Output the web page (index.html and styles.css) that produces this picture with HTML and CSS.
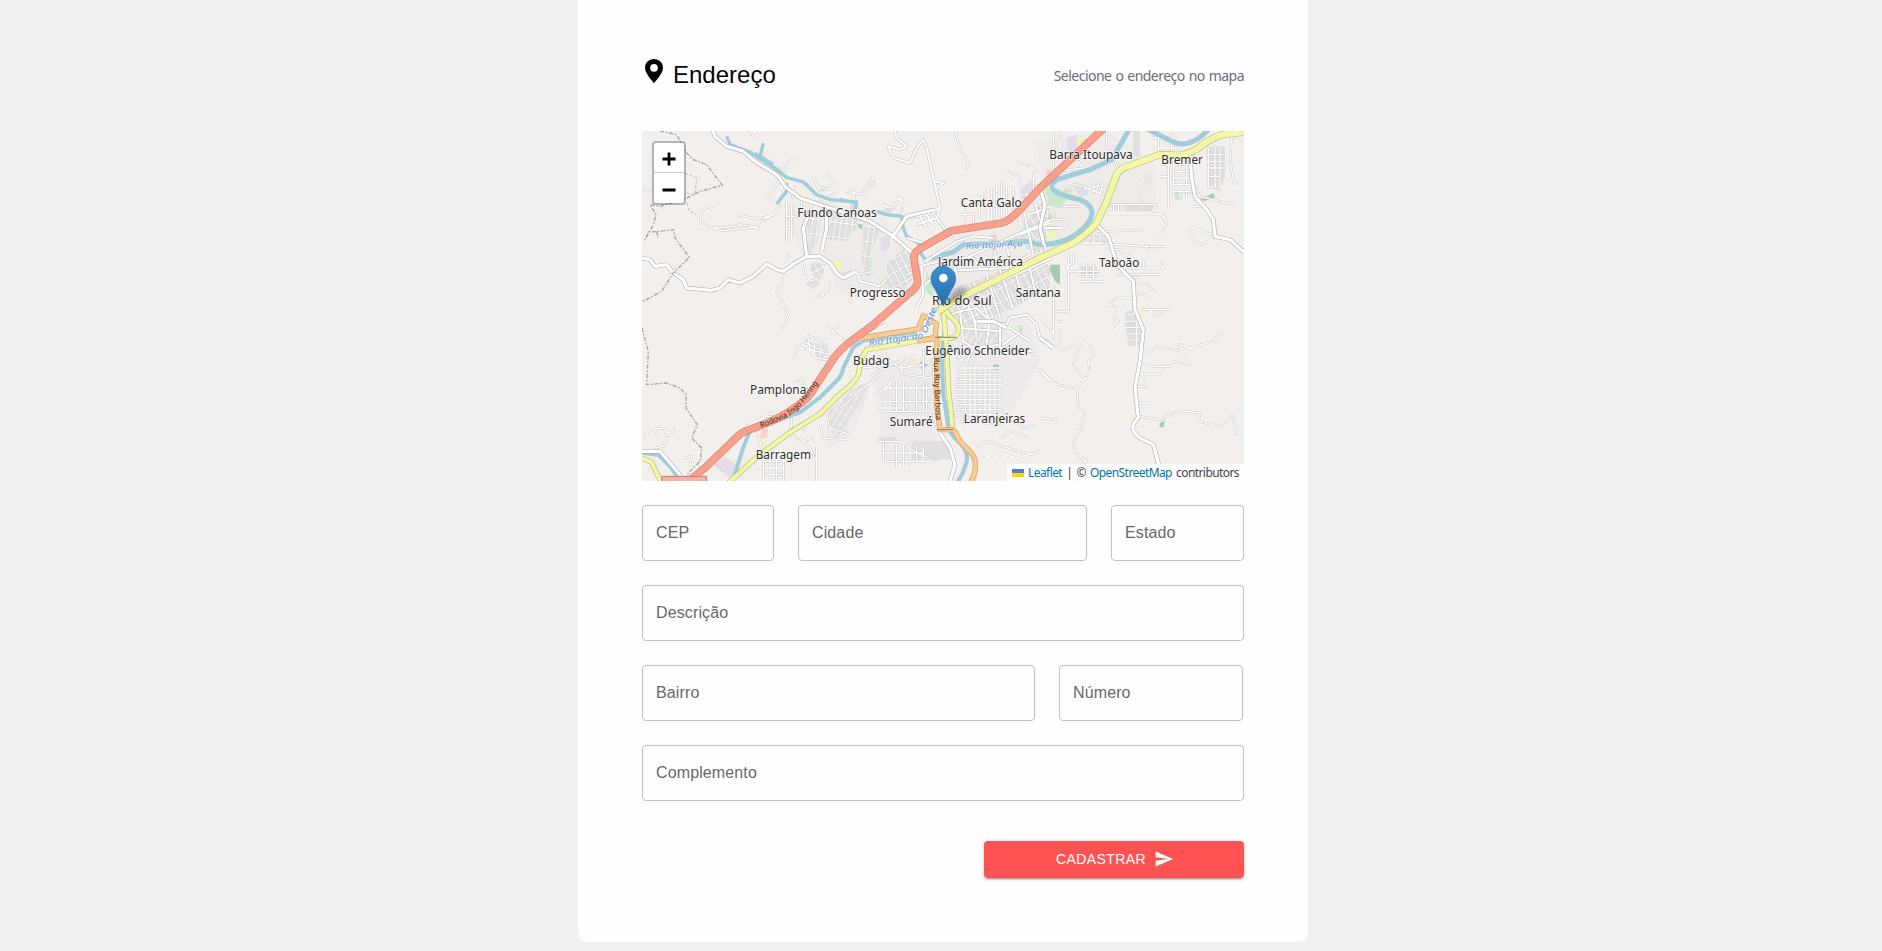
FILE: index.html
```html
<!DOCTYPE html>
<html lang="pt-BR">
<head>
<meta charset="utf-8">
<title>Endereço</title>
<link rel="stylesheet" href="styles.css">
</head>
<body>
<main class="card">
  <header class="header">
    <h1 class="title">
      <svg class="title-icon" viewBox="0 0 18 24"><path fill-rule="evenodd" d="M9 0C4 0 0 3.9 0 8.700C0 15 9 24 9 24S18 15 18 8.700C18 3.900 14 0 9 0ZM9 4.900A3.800 3.900 0 1 1 9 12.700A3.800 3.900 0 1 1 9 4.900Z"/></svg>
      <span>Endereço</span>
    </h1>
    <span class="hint">Selecione o endereço no mapa</span>
  </header>

  <section class="map">
    <svg class="map-canvas" viewBox="6 9 1806 1050" preserveAspectRatio="none">
      <defs>
        <pattern id="grid-a" width="17" height="44" patternUnits="userSpaceOnUse" patternTransform="rotate(8)"><path class="lot" d="M0 0H17V44H0Z"/><path class="lane-edge" d="M8 0V44M0 22H17"/><path class="lane" d="M8 0V44M0 22H17"/></pattern>
        <pattern id="grid-b" width="20" height="38" patternUnits="userSpaceOnUse" patternTransform="rotate(-28)"><path class="lot" d="M0 0H20V38H0Z"/><path class="lane-edge" d="M10 0V38M0 19H20"/><path class="lane" d="M10 0V38M0 19H20"/></pattern>
        <pattern id="grid-c" width="42" height="19" patternUnits="userSpaceOnUse"><path class="lot" d="M0 0H42V19H0Z"/><path class="lane-edge" d="M20 0V19M0 9H42"/><path class="lane" d="M20 0V19M0 9H42"/></pattern>
        <pattern id="grid-d" width="18" height="30" patternUnits="userSpaceOnUse" patternTransform="rotate(32)"><path class="lot" d="M0 0H18V30H0Z"/><path class="lane-edge" d="M9 0V30M0 15H18"/><path class="lane" d="M9 0V30M0 15H18"/></pattern>
        <g id="tracks">
          <path d="M6 188L50 182M320 0L345 30"/>
          <path d="M222 243L200 238L180 258L182 282L215 300L260 298L300 290L350 296L362 280L400 260L425 225M295 262L350 272L400 262M220 302L250 308L335 298L358 302M372 268L380 278"/>
          <path d="M342 60V95L380 108M395 125V95M430 130L440 105L470 88M425 150L390 200L375 198M390 200L395 225M440 165L425 205M470 165L455 215M500 160L520 180M520 145L530 175L560 185L590 160M560 140L575 155M535 175L545 215L590 195"/>
          <path d="M440 215V345M455 230V330M440 265H470M440 292H465M485 220V250M495 410L490 430L510 460L525 455M570 460L565 490L525 510M545 490L555 510"/>
          <path d="M432 405L445 390V370M430 440L425 470L410 490L425 515L430 545M630 460V530M650 440L700 430L720 470"/>
          <path d="M620 190L670 200L690 155M640 180L645 205M665 185L705 170L695 145M650 205V240M700 225L750 240L785 215M730 225L740 240M770 200L790 230L780 265M770 215L790 210"/>
          <path d="M945 9L960 60L985 100L980 125M1100 125L1140 150V290M1130 100L1170 115L1210 140M1085 160V280M1070 170V290M1100 180V275M1120 175V270M1140 200H1180M1160 190V250M1180 130V200M1055 180V285M1035 185V290M1018 200V275M1000 250V290M975 240V300M960 260H1000M1130 260L1150 300"/>
          <path d="M1240 9V130M1260 70L1330 100L1380 130M1400 9V60L1425 100L1435 130M1255 130L1330 120M1230 90L1270 40M1260 190Q1290 160 1330 175L1400 205M1350 155L1365 180L1355 195M1375 155L1370 200M1390 160L1380 200M1265 236H1325M1220 200L1222 270M1220 275H1275V300H1220M1240 255V275M1330 185L1390 170"/>
          <path d="M1395 230H1550L1535 252H1390M1420 230V252M1435 230V252M1450 230V252M1510 140L1525 165L1495 195L1510 225M1400 258H1570L1580 290L1560 320M1555 255L1580 280M1370 310L1495 308L1510 305M1530 140V165M1325 345H1370L1510 355H1575M1340 325V345M1360 325V345M1380 320V345M1470 350L1480 370M1510 350L1530 370M1545 350V370"/>
          <path d="M1555 25V90M1575 20V80M1595 15V75M1535 30H1610M1540 60H1620M1600 90V210M1620 90V210M1640 90V210M1600 110H1650M1600 130H1650M1600 150H1650M1600 170H1650M1600 190H1650M1585 90V240M1560 110H1585M1560 145H1585"/>
          <path d="M1705 60V180L1730 170M1725 50V180M1740 55V190M1700 80H1750M1700 100H1750M1700 120H1750M1700 145H1740M1775 30L1770 90L1780 160L1790 170M1775 30Q1800 15 1812 50M1655 170L1675 180M1650 200L1680 190M1660 220H1690M1660 235H1690M1680 205L1740 220L1780 228L1790 235"/>
          <path d="M1725 325L1690 350L1665 340L1645 310L1660 300L1720 322"/>
          <path d="M1285 380V560M1300 375V405L1280 415L1285 430H1380M1320 405V450M1340 405V450M1360 405V460M1320 460H1395M1325 440H1380M1400 365H1440L1455 385L1480 370M1430 440H1560M1440 420H1570L1565 400M1510 400V415M1470 445L1500 450M1480 470L1520 465L1530 480L1550 490M1480 490L1530 505M1405 530L1430 510H1480M1260 1V90"/>
          <path d="M1240 470V640M1250 550H1285M1250 580H1265M1260 600V650M1200 570L1230 600L1240 620M1410 528L1430 540L1420 570L1435 580L1415 600M1500 545H1590M1530 545L1550 565L1570 550M1480 535V560"/>
          <path d="M1500 660L1520 680L1550 655L1615 668L1620 650L1650 660L1725 638L1735 615L1750 618M1655 660L1630 690M1505 705L1540 715L1590 715L1600 700L1655 712M1495 738H1565M1505 740L1520 760M1485 775H1525M1490 825H1530M1500 830L1510 850M1500 865L1560 875L1600 855L1640 850L1680 855L1675 880L1740 895L1780 860L1790 920L1812 905"/>
          <path d="M1200 635L1270 665L1290 655L1320 645L1300 710L1335 755L1310 780L1250 770L1220 745L1200 720M1350 650L1360 680L1345 700L1350 730L1330 760M1310 780L1315 840L1335 850L1325 900L1300 940L1305 970L1350 1015M1200 870L1245 875L1250 888M1340 990L1310 1059M1555 1015L1540 1005"/>
          <path d="M430 527L445 560L435 590L420 600M460 690L475 655L500 645L550 670M490 640L505 625L560 640M510 665L530 690L590 700M505 630L510 670M525 640L520 685M545 640L540 690M560 590L580 610L600 590M575 610L620 640M490 660L570 680M555 640L575 690M460 760L490 755L500 790"/>
          <path d="M10 930L30 905L70 900L85 920L70 955L40 960M75 920L100 910L102 895M40 900L55 930M130 990L155 985L150 1010L180 1005M310 905L375 865H400M315 895L330 890L400 850M345 910L360 940L370 1000V1059M390 980V1059M410 990V1059M430 990V1059M370 1000H440M370 1020H430M370 1040H430M455 870V920L480 940L520 930M480 930L510 960L530 1000M490 880V910M540 890L550 930L620 935M560 860L570 900L630 920M530 955V1059"/>
          <path d="M735 760V850H860V760M750 760V850M770 760V850M790 760V850M810 760V850M830 760V850M850 760V850M735 780H880M735 820H880M710 840H780M715 940H780L830 975L870 990M730 940V1000H860M770 950V1020M790 950V1010M810 955V1010M830 955V1000M850 960V1000M820 860V850H860M730 975H850"/>
          <path d="M975 690V890M990 700V880M1005 700V880M1020 700V885M1035 720V890M1050 700V890M1065 730V890M1080 700V880M960 720H1080M950 740H1075M950 755H1090M950 770H1090M950 785H1080M950 800H1090M950 815H1080M950 830H1090M950 845H1080M960 860H1090M960 880H1110M1010 960L1040 940L1070 950L1120 965L1180 980M1030 990L1080 975L1130 990L1200 970M1120 880L1150 900L1190 890M1090 720L1110 740M1180 710L1230 760M1080 930L1110 910L1170 930"/>
          <path d="M655 690L700 700L740 670M670 720L760 710L800 690M690 750L730 720M640 800L700 760L720 740M700 800L740 780L760 740M780 700L790 750M820 680L800 740L870 750M740 690L780 720L850 710M600 840L650 800M850 660V740M680 700L720 720"/>
        </g>
        <g id="streets">
          <path d="M830 540L850 500L845 410M845 420L800 440M855 400L880 385L950 340L1000 325L1060 330M840 415L900 400L980 390L1130 320L1235 275M855 470L900 430L1100 420L1170 380M900 560L1000 500L1060 470L1150 430L1235 390M960 480L1010 590M1000 460L1050 580M1040 440L1080 570M1080 425L1120 545M1120 410L1150 520M1165 400L1185 490"/>
          <path d="M1140 320L1230 285M1185 220L1210 330L1220 380M1150 240L1180 380M1100 350L1110 400M1060 350L1070 400M1215 300L1260 300M1170 260L1230 235M940 400L950 440M1000 390L1020 420"/>
          <path d="M600 445L640 430L655 440L660 460L720 475L740 455M760 480L800 490L825 500M900 570L960 550L1010 540L1050 580L1100 590L1110 570L1160 560L1190 590L1200 630L1230 645"/>
          <path d="M960 550L970 640L1000 660L1080 650M1000 560L1010 630M1050 570L1040 650M960 600L1080 610M1080 590V660L1180 670M1110 600L1170 640M1090 650L1130 620"/>
          <path d="M800 270L880 255L895 240M830 290L890 270L935 330M840 265L860 300M860 260L880 290M800 330L870 350M890 270L900 240L890 195L880 150L860 60L850 35L830 60L810 105L760 90L745 55L780 65L800 55L770 30L765 9M885 160L910 165L890 180"/>
          <path d="M895 650L880 700L885 800M870 850L880 900M1010 640L980 700M930 650L960 690"/>
        </g>
        <g id="avenues">
          <path d="M215 0L225 25L260 55L310 70L345 100L410 140L440 180L480 210L540 230L600 250L690 280L760 325L820 378"/>
          <path d="M755 330L800 265L885 245M6 390L30 395L45 415L80 410L100 435L130 455L140 480L215 487L240 480L265 455L300 465L340 445L380 408L410 425L430 430L465 405L500 385H540L570 405L590 435L610 450L640 435"/>
          <path d="M1650 80L1655 150L1665 205L1700 245L1720 275L1725 325L1770 335L1812 372M1370 290L1405 325L1430 405L1450 430L1480 460L1485 545L1510 605L1500 700L1485 780L1495 870Q1460 900 1500 930L1540 950L1570 1059"/>
          <path d="M1200 180L1215 230L1200 300L1212 350M6 970L60 970L120 1040L125 1059M900 915L930 960L945 1010L930 1059M1010 580L1060 580L1100 600M500 385L490 300L510 250M545 370L560 300V245"/>
          <path d="M1200 630L1240 660M730 580L600 660M870 560L830 620"/>
        </g>
        <path id="highway" d="M1392 0L1200 180L1140 245Q1105 282 1085 285L935 308L840 362Q820 374 822 392L832 455Q834 475 820 485L700 590L620 650Q590 675 572 705L520 785Q505 812 470 835Q430 865 380 885L315 910Q300 916 288 930L200 1015L140 1065"/>
        <path id="highway-name" d="M364 900L430 872Q472 851 500 812L548 748L570 715"/>
        <g id="yellow">
          <path d="M1815 12L1745 20Q1725 26 1690 48Q1660 76 1620 82L1560 80L1455 118Q1435 126 1428 145L1400 220L1370 285Q1350 310 1300 345L1200 390L950 515L895 550"/>
        </g>
        <g id="yellow-minor">
          <path d="M900 520L930 565Q960 590 955 610Q950 632 920 632H870L680 665L665 690L655 740Q645 765 600 798L540 858L450 913L350 988L265 1065M910 550L920 658L925 780L938 900M6 990L35 1003L62 1059"/>
        </g>
        <path id="orange" d="M665 630L835 603L850 563L890 588L885 628L840 638L890 630V830L900 905H935Q945 908 950 920Q960 945 985 965Q1005 985 1006 1005Q1008 1040 990 1065"/>
      </defs>

      <rect class="land" x="0" y="0" width="1820" height="1065"/>
      <g class="urban">
        <path d="M430 225L550 215L730 270L810 400L820 490L600 500L550 380L490 400Z"/>
        <path d="M960 290L1100 290L1230 150L1240 390L1000 560L870 500L850 400Z"/>
        <path d="M1190 40L1400 9L1540 100L1550 250L1380 260L1390 350L1230 360Z"/>
        <path d="M700 700L880 690L890 980L730 1000Z"/>
        <path d="M950 540L1160 560L1200 700L1090 900L940 870Z"/>
        <path d="M560 870L640 780L700 750L650 900L560 970Z"/>
      </g>
      <path class="wood" d="M1222 410H1260L1260 470L1245 460ZM1680 215L1720 195L1725 210L1690 220ZM1560 885L1575 878L1570 898L1558 898ZM640 285L670 290L665 305ZM1060 710H1080V725H1060ZM840 700L865 710L845 725Z"/>
      <path class="park" d="M860 430L880 470V510L855 490ZM1215 180L1300 185L1260 240L1220 230ZM680 380L695 390L690 445H680ZM875 970L905 975L895 998H875ZM1130 590L1150 595L1145 620ZM405 110L425 120L420 140L405 135ZM535 175H555V190H535ZM1605 190H1625V215H1605ZM1220 255H1245V275H1220Z"/>
      <path class="sport" d="M580 400H605V425L580 430ZM370 65H380V80H370ZM433 150H443V165H433ZM735 430H750V455H735ZM805 688H825L820 720H810ZM1160 445H1180V465H1160ZM1220 310H1250V330H1220ZM1310 30H1330V50H1310ZM1500 555H1512V568H1500ZM1480 865H1490V875H1480ZM360 945L375 940L380 960H365ZM310 990L330 995L320 1005Z"/>
      <path class="industry" d="M220 1010L255 985L300 1020L270 1052ZM720 330L750 320V360L725 370ZM1300 175L1345 180V200L1320 205ZM1140 185L1180 150L1190 200L1150 220ZM1280 30L1310 20V80H1285Z"/>
      <path class="retail" d="M365 905L385 900L380 930H360ZM1218 130L1232 120V150H1218ZM1050 320H1070V340H1050ZM1055 500L1070 480V505H1060Z"/>
      <path class="lot" d="M495 465L520 450L540 465L518 485ZM730 245L770 240L740 260ZM495 340H515V375H495ZM1480 9H1500V85H1480ZM1700 55H1755V150L1735 190L1705 175ZM1460 232H1555L1535 255H1455ZM713 928H770V942H713ZM815 940H930V995H815Z"/>
      <g>
        <path fill="url(#grid-a)" d="M495 255L548 250L530 350L510 360ZM555 240L630 240L625 340L560 335ZM670 290L720 300L695 375L680 440L665 420ZM640 220L655 300L610 335L610 260Z"/>
        <path fill="url(#grid-b)" d="M740 410L800 350L815 385L822 450L775 500L735 480ZM980 470L1180 385L1230 410V480L1120 540L970 600L930 560ZM1215 210L1225 380L1110 350ZM515 400L560 410L540 455L510 440Z"/>
        <path fill="url(#grid-c)" d="M1455 550L1490 545V600H1455ZM1458 595H1505V655H1465ZM1320 415H1370V450H1320ZM1340 322H1400V345H1340Z"/>
        <path fill="url(#grid-d)" d="M565 850L640 780L690 760L650 850L590 930L565 900ZM500 640L555 650L580 690L540 700ZM960 600L1090 590L1080 650L970 650Z"/>
      </g>
      <g class="track-edge"><use href="#tracks"/></g>
      <g class="track"><use href="#tracks"/></g>
      <g class="river">
        <path d="M1515 0L1600 42Q1650 65 1710 0M1470 0L1415 95L1350 125L1250 155Q1200 190 1320 215Q1380 240 1340 290Q1290 350 1200 350L1160 340L1080 345L970 350L940 372L870 392"/>
        <path class="river-small" d="M260 25L270 50L330 72L400 118L440 148L490 162L530 200L570 215L650 222L645 245M370 45L360 85L400 110M440 165V190L410 228M600 215L650 225M710 250L740 260L785 265L790 300L800 325L835 345L845 380L860 400M345 75L375 100"/>
        <path class="river-mid" d="M905 500L900 545L915 590L905 678L910 800L925 898Q935 925 960 945Q985 970 980 1000Q970 1040 950 1065M890 540L830 618L670 638L640 658L610 720Q605 745 590 758L540 808L480 853L330 908L310 958L278 1060M6 975L55 980L90 1015L115 1050"/>
      </g>
      <g class="street-edge"><use href="#streets"/></g>
      <g class="street"><use href="#streets"/></g>
      <g class="avenue-edge"><use href="#avenues"/></g>
      <g class="avenue"><use href="#avenues"/></g>
      <g class="minor-edge yellow-edge"><use href="#yellow-minor"/></g>
      <g class="minor yellow-fill"><use href="#yellow-minor"/></g>
      <g class="minor-edge orange-edge"><use href="#orange"/></g>
      <g class="minor orange-fill"><use href="#orange"/></g>
      <g class="major-edge yellow-edge"><use href="#yellow"/></g>
      <g class="major yellow-fill"><use href="#yellow"/></g>
      <use class="highway-edge" href="#highway"/>
      <use class="highway-fill" href="#highway"/>
      <path class="bridge" d="M885 628H950M890 905H940"/>
      <path class="boundary" d="M60 9L110 20L140 75L160 95L200 110L247 172L180 190L130 215L60 235L30 230L48 260L40 290L15 335L25 312L60 310L100 305L105 330L148 388L100 435L65 490L6 522M50 310L55 330M6 600L25 670L20 770L80 765L120 780L138 800V840L172 890L155 930L185 960L180 1000L145 1035L135 1059"/>
      <path class="path" d="M135 135L170 150L165 200L140 195M140 225L148 250L168 258"/>
      <path class="shield" d="M65 1059V1045H200V1059"/>

      <g class="water-name">
        <text x="978" y="363" textLength="170" lengthAdjust="spacingAndGlyphs" transform="rotate(-3 978 363)">Rio Itajaí-Açu</text>
        <text x="688" y="654" textLength="164" lengthAdjust="spacingAndGlyphs" transform="rotate(-8 688 654)">Rio Itajaí do</text>
        <text x="859" y="618" textLength="82" lengthAdjust="spacingAndGlyphs" transform="rotate(-67 859 618)">Oeste</text>
      </g>
      <g class="road-name">
        <text><textPath href="#highway-name">Rodovia Ingo Hering</textPath></text>
        <text x="881" y="689" textLength="188" lengthAdjust="spacingAndGlyphs" transform="rotate(88 881 689)">Rua Ruy Barbosa</text>
      </g>
      <g class="place">
        <text x="472" y="268" textLength="238" lengthAdjust="spacingAndGlyphs">Fundo Canoas</text>
        <text x="962" y="237" textLength="183" lengthAdjust="spacingAndGlyphs">Canta Galo</text>
        <text x="1228" y="93" textLength="250" lengthAdjust="spacingAndGlyphs">Barra Itoupava</text>
        <text x="1564" y="109" textLength="125" lengthAdjust="spacingAndGlyphs">Bremer</text>
        <text x="894" y="415" textLength="255" lengthAdjust="spacingAndGlyphs">Jardim América</text>
        <text x="629" y="508" textLength="168" lengthAdjust="spacingAndGlyphs">Progresso</text>
        <text x="1127" y="507" textLength="135" lengthAdjust="spacingAndGlyphs">Santana</text>
        <text x="1377" y="417" textLength="121" lengthAdjust="spacingAndGlyphs">Taboão</text>
        <text x="876" y="532" textLength="179" lengthAdjust="spacingAndGlyphs">Rio do Sul</text>
        <text x="639" y="711" textLength="109" lengthAdjust="spacingAndGlyphs">Budag</text>
        <text x="856" y="680" textLength="313" lengthAdjust="spacingAndGlyphs">Eugênio Schneider</text>
        <text x="330" y="798" textLength="169" lengthAdjust="spacingAndGlyphs">Pamplona</text>
        <text x="347" y="992" textLength="166" lengthAdjust="spacingAndGlyphs">Barragem</text>
        <text x="749" y="893" textLength="129" lengthAdjust="spacingAndGlyphs">Sumaré</text>
        <text x="971" y="885" textLength="185" lengthAdjust="spacingAndGlyphs">Laranjeiras</text>
      </g>
      <defs>
        <linearGradient id="pin" x1="0" y1="0" x2="0" y2="1"><stop offset="0" stop-color="#3b8fd0"/><stop offset="1" stop-color="#286fad"/></linearGradient>
        <filter id="soft" x="-30%" y="-30%" width="160%" height="160%"><feGaussianBlur stdDeviation="7"/></filter>
      </defs>
      <path class="pin-shadow" filter="url(#soft)" d="M910 535L935 495Q960 470 978 480Q985 495 955 515Z"/>
      <path class="pin" d="M910 415C888 415 873 432 873 452C873 466 879 474 886 486L910 533L934 486C941 474 947 466 947 452C947 432 932 415 910 415Z"/>
      <circle cx="910" cy="450" r="13" fill="#fff"/>
    </svg>
    <div class="zoom">
      <button class="zoom-button" aria-label="Aproximar"><svg viewBox="0 0 14 14"><path d="M7 0.500V13.500M0.500 7H13.500"/></svg></button>
      <button class="zoom-button" aria-label="Afastar"><svg viewBox="0 0 14 14"><path d="M0.500 7H13.500"/></svg></button>
    </div>
    <div class="attribution">
      <svg class="flag" viewBox="0 0 12 8"><path fill="#4c7be1" d="M0 0h12v4H0z"/><path fill="#ffd500" d="M0 4h12v4H0z"/></svg>
      <span><a>Leaflet</a> <i class="divider">|</i> © <a>OpenStreetMap</a> contributors</span>
    </div>
  </section>

  <form class="form">
    <div class="row row-city">
      <label class="field">CEP</label>
      <label class="field">Cidade</label>
      <label class="field">Estado</label>
    </div>
    <div class="row"><label class="field">Descrição</label></div>
    <div class="row row-district">
      <label class="field">Bairro</label>
      <label class="field">Número</label>
    </div>
    <div class="row"><label class="field">Complemento</label></div>
    <button class="submit" type="button">
      <span>CADASTRAR</span>
      <svg class="send" viewBox="0 0 24 24"><path d="M2.010 21L23 12 2.010 3 2 10l15 2-15 2z"/></svg>
    </button>
  </form>
</main>
</body>
</html>
```
FILE: styles.css
```css
* { box-sizing: border-box; }

body {
  margin: 0;
  height: 951px;
  overflow: hidden;
  background: #f1eff2;
  font-family: "Liberation Sans", Arial, sans-serif;
}

.card {
  width: 730px;
  height: 942px;
  margin-left: 578px;
  padding: 56px 64px 0;
  background: #fefefe;
  border-radius: 0 0 8px 8px;
}

.header {
  display: flex;
  justify-content: space-between;
  height: 75px;
}

.title {
  display: flex;
  gap: 10px;
  margin: 0;
  padding: 3px 0 0 3px;
  color: #050505;
  font-size: 24px;
  font-weight: 400;
  line-height: 31px;
}

.title-icon { width: 18px; height: 24px; }

.hint {
  color: #6c6c80;
  font-family: "Noto Sans", sans-serif;
  font-size: 14px;
  letter-spacing: -0.52px;
  word-spacing: 0.8px;
  line-height: 40px;
}

.map {
  position: relative;
  height: 350px;
  overflow: hidden;
  border-radius: 2px;
}

.map-canvas { display: block; width: 602px; height: 350px; }
.map-canvas path, .map-canvas use { stroke-linejoin: round; }

.land { fill: #f2efec; }
.urban { fill: #ebe8e8; opacity: 0.65; }
.lot { fill: #e2dfdf; }
.wood { fill: #a3cdb4; }
.park { fill: #cbe8cd; }
.sport { fill: #eef5b5; }
.industry { fill: #e4dce8; }
.retail { fill: #f8cfcd; }

.lane-edge { fill: none; stroke: #cccaca; stroke-width: 6; }
.lane { fill: none; stroke: #fff; stroke-width: 3.500; }
.track-edge { fill: none; stroke: #c8c5c3; stroke-width: 7; }
.track { fill: none; stroke: #fff; stroke-width: 4; }
.street-edge { fill: none; stroke: #c3c0bf; stroke-width: 9.500; }
.street { fill: none; stroke: #fff; stroke-width: 6; }
.avenue-edge { fill: none; stroke: #b2afad; stroke-width: 13; }
.avenue { fill: none; stroke: #fff; stroke-width: 9.500; }

.river { fill: none; stroke: #9fcdda; stroke-width: 15; }
.river-small { stroke-width: 10; }
.river-mid { stroke-width: 12; }

.minor-edge { fill: none; stroke-width: 16; }
.minor { fill: none; stroke-width: 12; }
.major-edge { fill: none; stroke-width: 22; }
.major { fill: none; stroke-width: 18; }
.yellow-edge { stroke: #b9bc7e; }
.yellow-fill { stroke: #f3f7a6; }
.orange-edge { stroke: #cf9f62; }
.orange-fill { stroke: #fbcb92; }
.highway-edge { fill: none; stroke: #d9806c; stroke-width: 23; }
.highway-fill { fill: none; stroke: #f9a08c; stroke-width: 19; }
.bridge { fill: none; stroke: #6e6c55; stroke-width: 2.500; }
.boundary { fill: none; stroke: #aaa4a4; stroke-width: 4; stroke-dasharray: 13 5 5 5; }
.path { fill: none; stroke: #cbbf9c; stroke-width: 3; stroke-dasharray: 9 6; }
.shield { fill: #f3b3a7; stroke: #c6786d; stroke-width: 3; }

.place text {
  fill: #2d2d2d;
  stroke: rgba(255, 255, 255, 0.65);
  stroke-width: 5;
  paint-order: stroke;
  font: 36px "Noto Sans", sans-serif;
}

.water-name text {
  fill: #5c91c9;
  stroke: rgba(255, 255, 255, 0.55);
  stroke-width: 4;
  paint-order: stroke;
  font: italic 27px "Noto Sans", sans-serif;
}

.road-name text { fill: #40231e; font: 23px "Noto Sans", sans-serif; }

.pin { fill: url(#pin); stroke: #2b74b0; stroke-width: 2; }
.pin-shadow { fill: #333; opacity: 0.38; }

.zoom {
  position: absolute;
  top: 10px;
  left: 10px;
  width: 34px;
  height: 64px;
  border: 2px solid rgba(0, 0, 0, 0.25);
  border-radius: 4px;
  background: #fff;
  background-clip: padding-box;
}

.zoom-button {
  display: grid;
  place-items: center;
  width: 30px;
  height: 30px;
  padding: 3px 0 0;
  border: 0;
  background: none;
}

.zoom-button:first-child { border-bottom: 1px solid #ccc; }
.zoom-button svg { width: 14px; height: 14px; fill: none; stroke: #000; stroke-width: 2.800; }

.attribution {
  position: absolute;
  right: 0;
  bottom: 0;
  display: flex;
  align-items: center;
  gap: 4px;
  height: 17px;
  padding: 0 5px;
  background: rgba(255, 255, 255, 0.8);
  color: #444;
  font: 12px/17px "Noto Sans", sans-serif;
  letter-spacing: -0.58px;
  word-spacing: 1.6px;
  white-space: nowrap;
}

.attribution a { color: #0078a8; }
.flag { width: 12px; height: 8px; }
.divider { font-style: normal; }

.form {
  display: flex;
  flex-direction: column;
  gap: 24px;
  padding-top: 24px;
}

.row { display: grid; gap: 24px; }
.row-city { grid-template-columns: 132px 289px 133px; }
.row-district { grid-template-columns: 393px 184px; }

.field {
  height: 56px;
  padding-left: 13px;
  border: 1px solid #c0bfc1;
  border-radius: 4px;
  color: #69686a;
  font-size: 16px;
  letter-spacing: 0.12px;
  line-height: 54px;
}

.submit {
  display: flex;
  align-items: center;
  justify-content: center;
  gap: 8px;
  align-self: flex-end;
  width: 260px;
  height: 37px;
  margin-top: 16px;
  padding: 0 3px 1px 5px;
  border: 0;
  border-radius: 4px;
  background: #ff5252;
  box-shadow: 0 3px 1px -2px rgba(0, 0, 0, 0.2), 0 2px 2px rgba(0, 0, 0, 0.14), 0 1px 5px rgba(0, 0, 0, 0.12);
  color: #fff;
  font: 14px "Liberation Sans", Arial, sans-serif;
  letter-spacing: 0.4px;
}

.send { width: 20px; height: 20px; fill: #fff; }
```
